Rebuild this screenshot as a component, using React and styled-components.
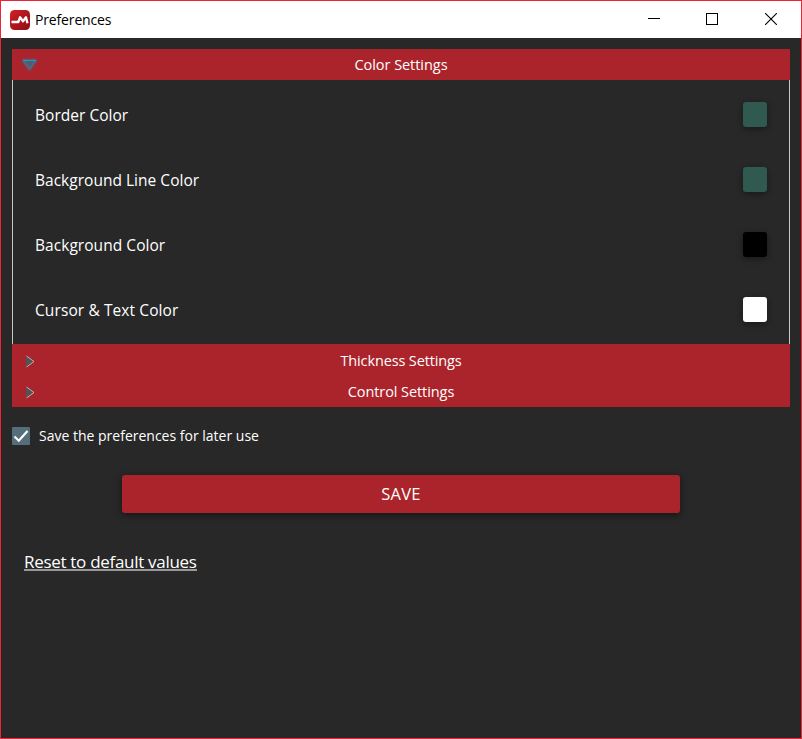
import React from "react";
import styled, { createGlobalStyle } from "styled-components";

const Global = createGlobalStyle`
  * { box-sizing: border-box; }
  body { margin: 0; background: #282828; }
`;

const Window = styled.div`
  width: 802px;
  height: 739px;
  border: 1px solid #ec2535;
  background: #282828;
  color: #fff;
  font-family: "Open Sans", "Noto Sans", sans-serif;
  overflow: hidden;
`;

const TitleBar = styled.header`
  display: flex;
  align-items: center;
  height: 37px;
  padding: 0 1px 0 9px;
  background: #fff;
  color: #000;
`;

const Title = styled.h1`
  flex: 1;
  margin: 0 0 0 5px;
  font-size: 14px;
  font-weight: 400;
  line-height: 20px;
  letter-spacing: -0.15px;
`;

const WindowControl = styled.button`
  display: flex;
  align-items: center;
  justify-content: center;
  width: 58.5px;
  height: 37px;
  padding: 0 0 2px;
  border: 0;
  background: none;
`;

const Content = styled.main`
  display: flex;
  flex-direction: column;
  padding: 11px 11px 0;
`;

const SectionHeader = styled.button`
  display: grid;
  grid-template-columns: 36px 1fr 36px;
  align-items: center;
  width: 778px;
  height: ${(p) => p.$height}px;
  padding: ${(p) => p.$height - 31}px 0 0;
  border: 0;
  background: #ab242b;
  color: #fff;
  font: 400 14.5px/20px "Open Sans", sans-serif;
  letter-spacing: ${(p) => p.$spacing}px;
`;

const Rows = styled.div`
  height: 264px;
  padding: 2px 22px;
  border: solid #c8c8c8;
  border-width: 0 1px;
`;

const Row = styled.div`
  display: flex;
  align-items: center;
  justify-content: space-between;
  height: 65px;
`;

const RowLabel = styled.span`
  font-size: 15.5px;
  line-height: 22px;
  letter-spacing: ${(p) => p.$spacing}px;
`;

const Swatch = styled.button`
  width: 24px;
  height: 25px;
  padding: 0;
  border: 0;
  border-radius: 3px;
  background: ${(p) => p.$color};
  box-shadow: 0 2px 6px rgba(0, 0, 0, 0.4);
`;

const CheckRow = styled.label`
  display: flex;
  align-items: center;
  gap: 9px;
  height: 18px;
  margin-top: 20px;
  font-size: 14px;
  line-height: 18px;
  letter-spacing: 0;
`;

const CheckText = styled.span`
  padding-bottom: 1px;
`;

const CheckBox = styled.span`
  display: flex;
  width: 18px;
  height: 18px;
  border-radius: 1px;
  background: #546e7a;
`;

const SaveButton = styled.button`
  align-self: center;
  width: 558px;
  height: 38px;
  margin-top: 30px;
  padding: 0;
  border: 0;
  border-radius: 3px;
  background: #ab242b;
  box-shadow: 0 2px 7px rgba(0, 0, 0, 0.5);
  color: #fff;
  font: 400 16.5px/22px "Open Sans", sans-serif;
  letter-spacing: 0.3px;
`;

const ResetLink = styled.a`
  align-self: flex-start;
  height: 21px;
  margin: 37px 0 0 12px;
  border-bottom: 2px solid #999;
  font-size: 17px;
  line-height: 24px;
  letter-spacing: -0.3px;
  white-space: nowrap;
`;

const Logo = () => (
  <svg width="20" height="20" viewBox="0 0 20 20">
    <defs>
      <linearGradient id="logoRed" x1="0" y1="0" x2="1" y2="1">
        <stop offset="0" stopColor="#d21f26" />
        <stop offset="1" stopColor="#8e0e14" />
      </linearGradient>
    </defs>
    <rect width="20" height="20" rx="4.5" fill="url(#logoRed)" />
    <path d="M1.5 12H8.3L10 7.3L13 11.3L16 7.3L17.5 13.2" fill="none" stroke="#fff" strokeWidth="2.3" strokeLinejoin="round" />
  </svg>
);

const Arrow = ({ open }) =>
  open ? (
    <svg width="36" height="31" viewBox="0 0 36 31">
      <defs>
        <filter id="glow" x="-50%" y="-50%" width="200%" height="200%">
          <feGaussianBlur stdDeviation="1.1" />
        </filter>
      </defs>
      <path d="M11.5 11.5H23.5L17.5 20Z" fill="none" stroke="#1798d0" strokeWidth="1.4" filter="url(#glow)" />
      <path d="M12 11.5L17.5 19.7L23 11.5Z" fill="#5b5b5f" stroke="#1a86b4" strokeWidth="0.9" />
      <path d="M11 11.5H24" stroke="#0b9fe0" />
    </svg>
  ) : (
    <svg width="36" height="31" viewBox="0 0 36 31">
      <path d="M14 11V22L22 16.5Z" fill="#505456" />
      <path d="M14.5 11L22 16.5L14.5 22" fill="none" stroke="#c9bcbc" strokeWidth="0.9" />
    </svg>
  );

const colors = [
  { label: "Border Color", color: "#30594f", spacing: 0.03 },
  { label: "Background Line Color", color: "#30594f", spacing: 0.02 },
  { label: "Background Color", color: "#000", spacing: 0.05 },
  { label: "Cursor & Text Color", color: "#fff", spacing: 0.1 },
];

const Section = ({ title, open, spacing, height, children }) => (
  <section>
    <SectionHeader $spacing={spacing} $height={height}>
      <Arrow open={open} />
      <span>{title}</span>
    </SectionHeader>
    {children}
  </section>
);

export default function App() {
  return (
    <Window>
      <Global />
      <TitleBar>
        <Logo />
        <Title>Preferences</Title>
        <WindowControl aria-label="Minimize">
          <svg width="12" height="12"><path d="M0 5.5H12" stroke="#000" /></svg>
        </WindowControl>
        <WindowControl aria-label="Maximize">
          <svg width="12" height="12"><rect x=".5" y=".5" width="11" height="11" fill="none" stroke="#000" /></svg>
        </WindowControl>
        <WindowControl aria-label="Close">
          <svg width="12" height="12"><path d="M0 0L12 12M12 0L0 12" stroke="#000" strokeWidth="1.1" /></svg>
        </WindowControl>
      </TitleBar>
      <Content>
        <Section title="Color Settings" open spacing={-0.05} height={31}>
          <Rows>
            {colors.map((c) => (
              <Row key={c.label}>
                <RowLabel $spacing={c.spacing}>{c.label}</RowLabel>
                <Swatch $color={c.color} aria-label={c.label} />
              </Row>
            ))}
          </Rows>
        </Section>
        <Section title="Thickness Settings" spacing={-0.14} height={32} />
        <Section title="Control Settings" spacing={-0.08} height={31} />
        <CheckRow>
          <CheckBox>
            <svg width="18" height="18"><path d="M2.5 9.5L6.8 13.7L15.5 4" fill="none" stroke="#fff" strokeWidth="2.2" /></svg>
          </CheckBox>
          <CheckText>Save the preferences for later use</CheckText>
        </CheckRow>
        <SaveButton>SAVE</SaveButton>
        <ResetLink>Reset to default values</ResetLink>
      </Content>
    </Window>
  );
}
